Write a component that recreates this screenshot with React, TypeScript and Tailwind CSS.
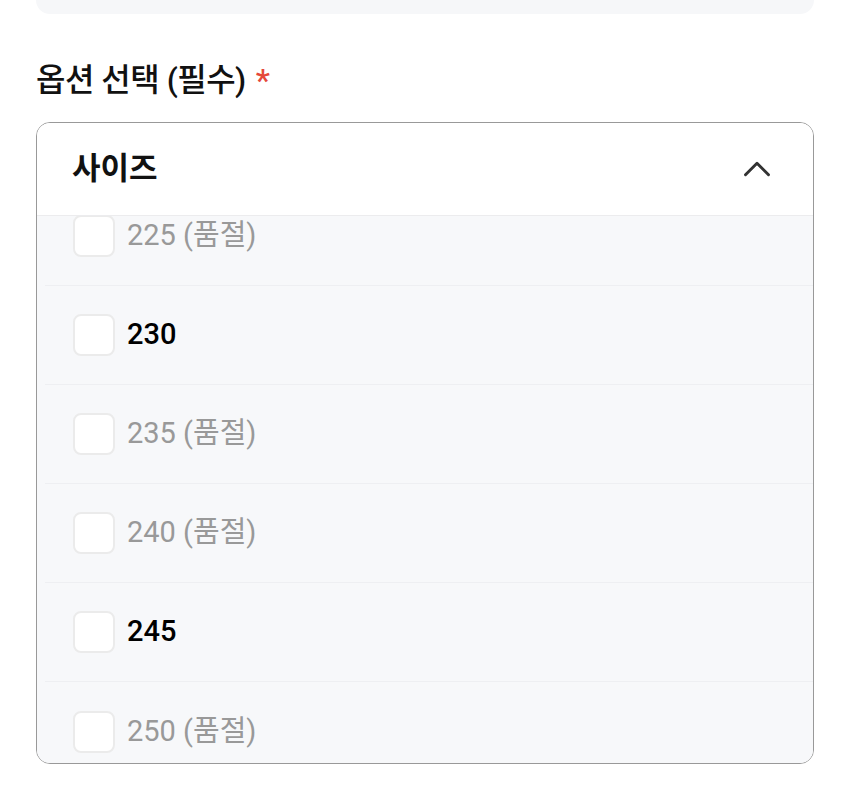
import { ChevronUp } from 'lucide-react';

const sizes = [
  { label: '225', soldOut: true },
  { label: '230', soldOut: false },
  { label: '235', soldOut: true },
  { label: '240', soldOut: true },
  { label: '245', soldOut: false },
  { label: '250', soldOut: true },
];

export default function App() {
  return (
    <div
      className="w-[850px] h-[801px] bg-white overflow-hidden"
      style={{ fontFamily: 'Roboto, "Noto Sans CJK KR", sans-serif' }}
    >
      {/* previous field */}
      <div className="mx-[36px] h-[14px] rounded-b-[14px] bg-[#f6f7f9]" />

      <div className="px-[36px] pt-[44px]">
        <h2 className="flex items-center text-[32px] font-medium leading-[44px] text-[#111] tracking-[-0.5px]">
          옵션 선택 (필수)
          <span className="ml-[10px] text-[#e5483a]">*</span>
        </h2>

        <div className="mt-[20px] rounded-[14px] border border-[#999] overflow-hidden">
          {/* header */}
          <div className="flex h-[93px] items-center justify-between border-b border-[#ececee] bg-white pl-[35px] pr-[33px]">
            <span className="text-[31px] font-bold text-[#111]">사이즈</span>
            <ChevronUp className="h-[46px] w-[46px] text-[#333]" strokeWidth={1.5} />
          </div>

          {/* options list (scrolled) */}
          <div className="h-[547px] overflow-hidden bg-[#f7f8fa]">
            <div className="-mt-[29px]">
              {sizes.map((s, i) => (
                <div
                  key={s.label}
                  className={
                    i < sizes.length - 1
                      ? 'ml-[8px] flex h-[99px] items-center border-b border-[#eeeff2] pl-[28px]'
                      : 'ml-[8px] flex h-[99px] items-center pl-[28px]'
                  }
                >
                  <div className="h-[42px] w-[42px] rounded-[8px] border-2 border-[#ebebeb] bg-white" />
                  <span
                    className={
                      s.soldOut
                        ? 'ml-[12px] text-[29px] text-[#999]'
                        : 'ml-[12px] text-[29px] font-medium text-black'
                    }
                  >
                    {s.soldOut ? `${s.label} (품절)` : s.label}
                  </span>
                </div>
              ))}
            </div>
          </div>
        </div>
      </div>
    </div>
  );
}
